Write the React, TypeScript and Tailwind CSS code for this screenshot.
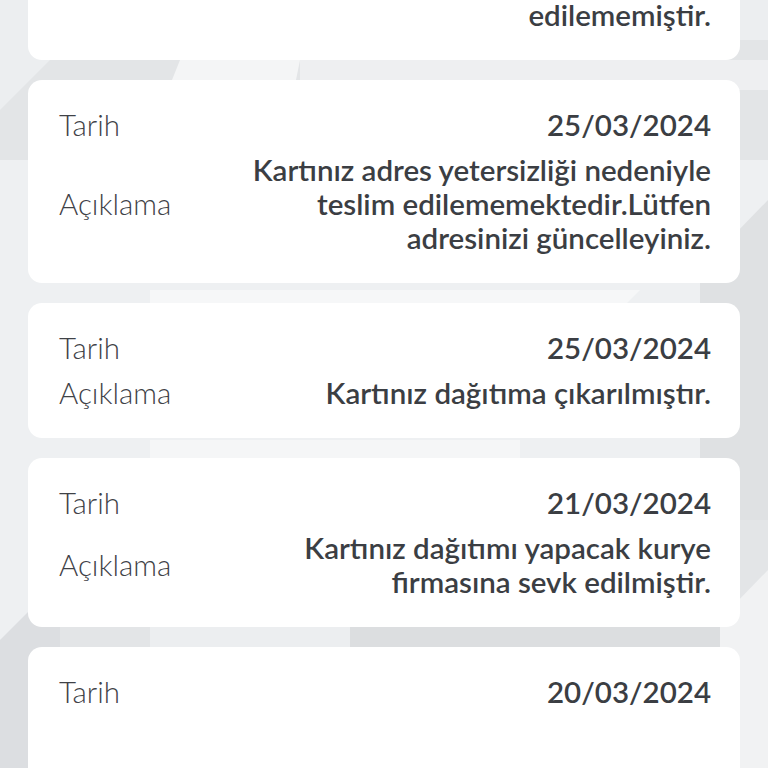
import React from 'react';

type Entry = { date: string; text: React.ReactNode };

const entries: Entry[] = [
  { date: '25/03/2024', text: 'Kartınız adres yetersizliği nedeniyle teslim edilememektedir.Lütfen adresinizi güncelleyiniz.' },
  { date: '25/03/2024', text: 'Kartınız dağıtıma çıkarılmıştır.' },
  { date: '21/03/2024', text: 'Kartınız dağıtımı yapacak kurye firmasına sevk edilmiştir.' },
];

function Backdrop() {
  // faceted grey background behind the cards
  return (
    <svg className="absolute inset-0 h-full w-full" viewBox="0 0 768 768" preserveAspectRatio="none">
      <rect width="768" height="768" fill="#e3e5e7" />
      <polygon points="0,110 70,40 768,40 768,0 0,0" fill="#eceef0" />
      <polygon points="180,60 300,60 290,110 160,110" fill="#f4f5f6" />
      <polygon points="300,60 768,60 768,90 300,90" fill="#eeeff1" />
      <polygon points="0,160 768,160 768,460 0,640" fill="#eef0f2" />
      <polygon points="150,290 640,290 620,310 150,310" fill="#f6f7f8" />
      <polygon points="150,440 520,440 520,460 150,460" fill="#f5f6f7" />
      <polygon points="700,270 768,200 768,520 700,520" fill="#dfe1e3" />
      <polygon points="0,640 60,580 60,768 0,768" fill="#dcdee1" />
      <polygon points="700,640 768,570 768,768 700,768" fill="#f1f2f3" />
      <polygon points="150,627 720,627 720,647 150,647" fill="#dcdee0" />
      <polygon points="150,627 350,627 350,647 150,647" fill="#eceef0" />
    </svg>
  );
}

function Card({ children }: { children: React.ReactNode }) {
  return (
    <div className="rounded-[14px] bg-white py-[28px] pl-[31px] pr-[29px]">
      <div className="flex flex-col gap-[11px]">{children}</div>
    </div>
  );
}

function Row({ label, value, className = '' }: { label: string; value: React.ReactNode; className?: string }) {
  return (
    <div className={`flex items-center ${className}`}>
      <span className="w-[150px] shrink-0 font-light text-[#3f4247]">{label}</span>
      <span className="flex-1 text-right font-semibold text-[#3b3e43]">{value}</span>
    </div>
  );
}

export default function App() {
  return (
    <div className="relative h-[768px] w-[768px] overflow-hidden font-['Lato',sans-serif] text-[29.5px] leading-[34px]">
      <Backdrop />
      <div className="relative mx-[28px] -mt-[143px] flex flex-col gap-[20px]">
        <Card>
          <Row label="Tarih" value="26/03/2024" />
          <Row
            label="Açıklama"
            value={
              <>
                Kartınız adres yetersizliği nedeniyle
                <br />
                kurye firması tarafından teslim
                <br />
                edilememiştir.
              </>
            }
          />
        </Card>
        {entries.map((e, i) => (
          <Card key={i}>
            <Row label="Tarih" value={e.date} />
            <Row label="Açıklama" value={e.text} />
          </Card>
        ))}
        <Card>
          <Row label="Tarih" value="20/03/2024" />
          <Row label="Açıklama" value="Kartınız basılmıştır." className="mt-[44px]" />
        </Card>
      </div>
    </div>
  );
}
